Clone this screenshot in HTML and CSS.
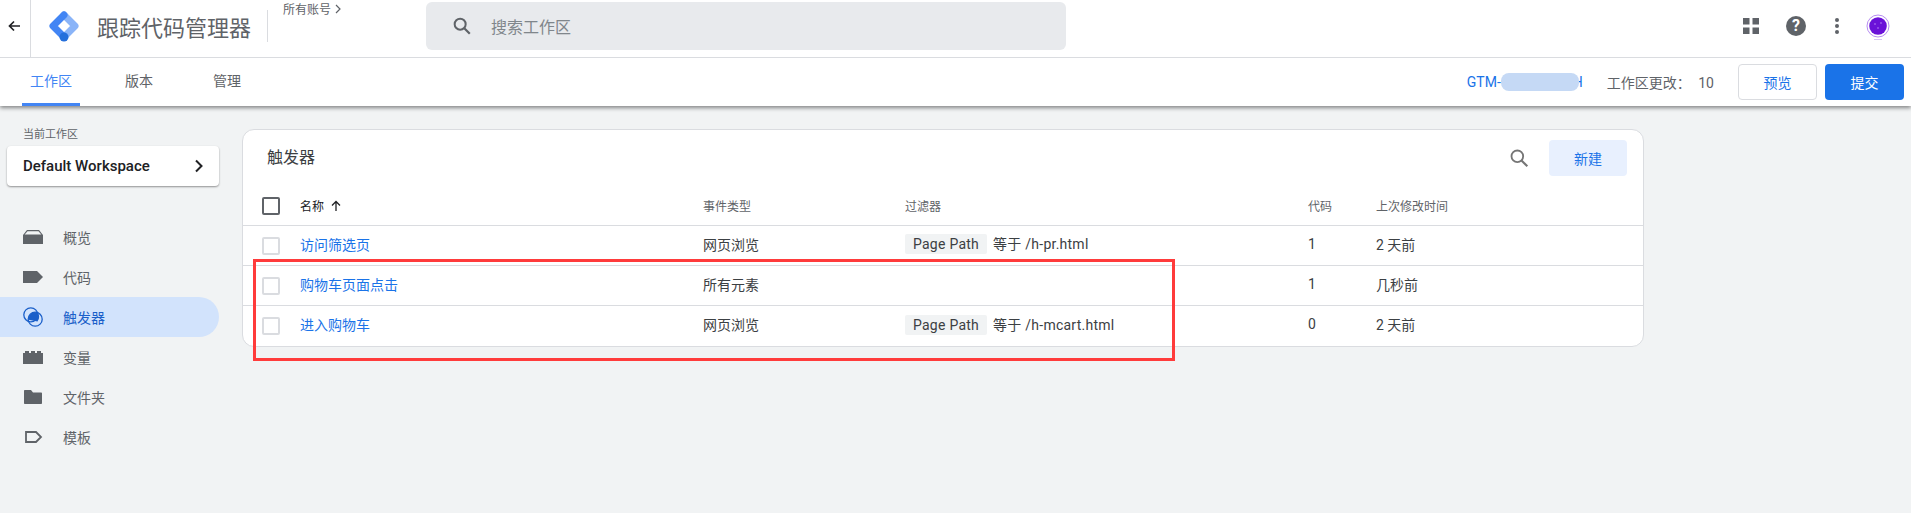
FILE: index.html
```html
<!DOCTYPE html>
<html lang="zh-CN">
<head>
    <meta charset="UTF-8">
    <title>跟踪代码管理器</title>
    <link rel="stylesheet" href="styles.css">
</head>
<body>
    <header class="app-header">
        <div class="top-bar">
            <div class="back-btn">
                <svg width="14" height="14" viewBox="0 0 14 14"><path d="M13 7H3M7 2.5 2.500 7 7 11.500" fill="none" stroke="#202124" stroke-width="1.7"/></svg>
            </div>
            <svg class="logo" width="30" height="32" viewBox="0 0 30 32" fill="none" stroke-width="7" stroke-linecap="round" stroke-linejoin="round">
                <path d="M15 5 26 16 15 27" stroke="#8ab4f8"/>
                <path d="M15 5 4 16 15 27" stroke="#4285f4"/>
                <circle cx="15" cy="27" r="4.500" fill="#246fdb" stroke="none"/>
            </svg>
            <div class="app-title">跟踪代码管理器</div>
            <div class="title-divider"></div>
            <div class="crumb">所有账号 <svg width="8" height="10" viewBox="0 0 8 10"><path d="M2 1l4 4-4 4" fill="none" stroke="#5f6368" stroke-width="1.2"/></svg></div>
            <div class="search-box">
                <svg width="22" height="22" viewBox="0 0 24 24"><circle cx="10" cy="10" r="6" fill="none" stroke="#5f6368" stroke-width="2.2"/><path d="M14.500 14.500 20.500 20.500" stroke="#5f6368" stroke-width="2.4"/></svg>
                <span>搜索工作区</span>
            </div>
            <div class="top-icons">
                <svg class="icon-apps" width="16" height="16" viewBox="0 0 16 16" fill="#5f6368"><rect width="6.500" height="6.500"/><rect x="9.500" width="6.500" height="6.500"/><rect y="9.500" width="6.500" height="6.500"/><rect x="9.500" y="9.500" width="6.500" height="6.500"/></svg>
                <div class="icon-help">?</div>
                <svg class="icon-more" width="4" height="16" viewBox="0 0 4 16" fill="#5f6368"><circle cx="2" cy="2" r="2"/><circle cx="2" cy="8" r="2"/><circle cx="2" cy="14" r="2"/></svg>
                <svg class="icon-avatar" width="24" height="27" viewBox="0 0 24 27">
                    <circle cx="12" cy="12" r="11" fill="#fff" stroke="#b78cf2" stroke-width="1"/>
                    <circle cx="12" cy="12" r="8.800" fill="#6a11d8"/>
                    <circle cx="9" cy="10" r="0.800" fill="#b98af5"/><circle cx="15" cy="9" r="0.800" fill="#b98af5"/><circle cx="12" cy="14" r="0.800" fill="#b98af5"/>
                    <rect x="8" y="25" width="8" height="1" fill="#d9c5f7"/>
                </svg>
            </div>
        </div>
        <div class="nav-bar">
            <nav class="tabs">
                <a class="tab tab-active">工作区</a>
                <a class="tab tab-versions">版本</a>
                <a class="tab">管理</a>
            </nav>
            <div class="nav-right">
                <span class="gtm-id">GTM-<span class="gtm-blur"></span>H</span>
                <span class="change-count">工作区更改： <span class="count-num">10</span></span>
                <button class="btn btn-preview">预览</button>
                <button class="btn btn-submit">提交</button>
            </div>
        </div>
    </header>

    <div class="page">
        <aside class="sidebar">
            <div class="ws-label">当前工作区</div>
            <div class="ws-card">
                <span>Default Workspace</span>
                <svg width="12" height="14" viewBox="0 0 12 14"><path d="M3 1.500 8.500 7 3 12.500" fill="none" stroke="#202124" stroke-width="2"/></svg>
            </div>
            <ul class="side-menu">
                <li class="side-item">
                    <svg width="20" height="16" viewBox="0 0 20 16" fill="#5f6368"><path d="M4 1h12l4 5v9H0V6z"/><path d="M4.500 2.200h11L18.300 5.500H1.700z" fill="#f1f3f4"/></svg>
                    <span>概览</span>
                </li>
                <li class="side-item">
                    <svg width="20" height="14" viewBox="0 0 20 14" fill="#5f6368"><path d="M0 1h14l6 6-6 6H0z"/></svg>
                    <span>代码</span>
                </li>
                <li class="side-item side-active">
                    <svg width="20" height="20" viewBox="0 0 20 20"><circle cx="7.800" cy="7.800" r="7" fill="none" stroke="#1a5fc9" stroke-width="1.3"/><circle cx="12.200" cy="12.200" r="7" fill="none" stroke="#1a5fc9" stroke-width="1.3"/><path d="M5.500 12.800A7 7 0 0 1 14.500 5.500 7 7 0 0 1 14.500 14.500z" fill="#1a5fc9"/></svg>
                    <span>触发器</span>
                </li>
                <li class="side-item">
                    <svg width="20" height="14" viewBox="0 0 20 14" fill="#5f6368"><path d="M0 3h2V1h4v2h2V1h4v2h2V1h4v2h2v11H0z"/></svg>
                    <span>变量</span>
                </li>
                <li class="side-item">
                    <svg width="20" height="16" viewBox="0 0 20 16" fill="#5f6368"><path d="M1 2c0-.6.400-1 1-1h6l2 2.500h8c.6 0 1 .4 1 1V14c0 .6-.4 1-1 1H2c-.6 0-1-.4-1-1z"/></svg>
                    <span>文件夹</span>
                </li>
                <li class="side-item">
                    <svg width="20" height="14" viewBox="0 0 20 14"><path d="M3 2h10l5 5-5 5H3z" fill="none" stroke="#5f6368" stroke-width="1.8"/></svg>
                    <span>模板</span>
                </li>
            </ul>
        </aside>

        <main class="content">
            <section class="card">
                <div class="card-head">
                    <h2>触发器</h2>
                    <div class="card-actions">
                        <svg width="20" height="20" viewBox="0 0 24 24"><circle cx="10" cy="10" r="7" fill="none" stroke="#757575" stroke-width="2.2"/><path d="M15 15 22 22" stroke="#757575" stroke-width="2.6"/></svg>
                        <button class="btn-new">新建</button>
                    </div>
                </div>
                <div class="row row-head">
                    <div><span class="check check-dark"></span></div>
                    <div class="col-name">名称 <svg width="12" height="12" viewBox="0 0 12 12"><path d="M6 11V2M2 5.500 6 1.500l4 4" fill="none" stroke="#202124" stroke-width="1.3"/></svg></div>
                    <div>事件类型</div>
                    <div>过滤器</div>
                    <div>代码</div>
                    <div>上次修改时间</div>
                </div>
                <div class="row">
                    <div><span class="check"></span></div>
                    <div><a class="link">访问筛选页</a></div>
                    <div>网页浏览</div>
                    <div class="col-filter"><span class="chip">Page Path</span>等于 /h-pr.html</div>
                    <div>1</div>
                    <div>2 天前</div>
                </div>
                <div class="row">
                    <div><span class="check"></span></div>
                    <div><a class="link">购物车页面点击</a></div>
                    <div>所有元素</div>
                    <div></div>
                    <div>1</div>
                    <div>几秒前</div>
                </div>
                <div class="row row-last">
                    <div><span class="check"></span></div>
                    <div><a class="link">进入购物车</a></div>
                    <div>网页浏览</div>
                    <div class="col-filter"><span class="chip">Page Path</span>等于 /h-mcart.html</div>
                    <div>0</div>
                    <div>2 天前</div>
                </div>
            </section>
        </main>
    </div>

    <!-- red annotation box drawn on top of the screenshot -->
    <div class="annotation"></div>
</body>
</html>
```
FILE: styles.css
```css
* {
    box-sizing: border-box;
}
html, body {
    height: 100%;
}
body {
    margin: 0;
    background-color: #f1f3f4;
    font-family: Roboto, "Noto Sans CJK SC", sans-serif;
    font-size: 14px;
    color: #3c4043;
    overflow: hidden;
}
.app-header {
    background-color: white;
    box-shadow: 0 2px 4px rgba(0, 0, 0, 0.45);
    position: relative;
}
.top-bar {
    height: 58px;
    display: flex;
    align-items: center;
    padding-bottom: 5px;
    border-bottom: 1px solid #dadce0;
}
.back-btn {
    width: 31px;
    height: 57px;
    margin-bottom: -5px;
    display: flex;
    align-items: center;
    justify-content: center;
    padding-right: 2px;
    border-right: 1px solid #dadce0;
}
.back-btn svg {
    margin-bottom: 5px;
}
.logo {
    margin-left: 18px;
}
.app-title {
    margin-left: 18px;
    font-size: 22px;
    color: #5f6368;
}
.title-divider {
    width: 1px;
    height: 32px;
    margin-left: 16px;
    background-color: #dadce0;
}
.crumb {
    align-self: flex-start;
    margin: 2px 0 0 15px;
    font-size: 12px;
    line-height: 16px;
    color: #5f6368;
}
.search-box {
    position: absolute;
    left: 426px;
    top: 2px;
    width: 640px;
    height: 48px;
    display: flex;
    align-items: center;
    gap: 18px;
    padding-left: 25px;
    border-radius: 6px;
    background-color: #e8eaed;
    font-size: 16px;
    color: #80868b;
}
.top-icons {
    margin-left: auto;
    display: flex;
    align-items: center;
}
.icon-apps {
    margin-right: 27px;
}
.icon-help {
    width: 20px;
    height: 20px;
    border-radius: 50%;
    background-color: #5f6368;
    color: white;
    font-size: 16px;
    font-weight: 700;
    line-height: 20px;
    text-align: center;
    margin-right: 29px;
}
.icon-more {
    margin-right: 27px;
}
.icon-avatar {
    margin-right: 21px;
    margin-top: 3px;
}
.nav-bar {
    height: 48px;
    display: flex;
    align-items: stretch;
    justify-content: space-between;
}
.tabs {
    display: flex;
    padding-left: 22px;
}
.tab {
    line-height: 46px;
    text-align: center;
    color: #5f6368;
    padding: 0 8px;
    margin-right: 37px;
}
.tab-active {
    color: #4285f4;
    border-bottom: 3px solid #4285f4;
    border-radius: 3px 3px 0 0;
}
.tab-versions {
    margin-right: 44px;
}
.nav-right {
    display: flex;
    align-items: center;
}
.gtm-id {
    display: flex;
    align-items: center;
    color: #1a73e8;
    margin-right: 24px;
}
.gtm-blur {
    display: inline-block;
    position: relative;
    z-index: 1;
    width: 78px;
    height: 18px;
    margin-right: -6px;
    border-radius: 8px;
    background-color: #c5d9f5;
}
.change-count {
    color: #5f6368;
    margin-right: 24px;
}
.count-num {
    margin-left: 4px;
}
.btn {
    width: 79px;
    height: 36px;
    border-radius: 4px;
    font-family: inherit;
    font-size: 14px;
}
.btn-preview {
    background-color: white;
    border: 1px solid #dadce0;
    color: #1a73e8;
    margin-right: 8px;
}
.btn-submit {
    background-color: #1a73e8;
    border: none;
    color: white;
    margin-right: 7px;
}
.page {
    display: flex;
    align-items: flex-start;
}
.sidebar {
    width: 220px;
    flex-shrink: 0;
}
.ws-label {
    margin: 21px 0 0 23px;
    font-size: 11px;
    line-height: 15px;
    color: #5f6368;
}
.ws-card {
    width: 212px;
    height: 40px;
    margin: 4px 0 0 7px;
    padding: 0 14px 0 16px;
    display: flex;
    align-items: center;
    justify-content: space-between;
    background-color: white;
    border-radius: 4px;
    box-shadow: 0 1px 2px rgba(0, 0, 0, 0.4);
    font-size: 15px;
    font-weight: 500;
    color: #202124;
}
.side-menu {
    list-style: none;
    margin: 31px 0 0;
    padding: 0;
}
.side-item {
    width: 219px;
    height: 40px;
    display: flex;
    align-items: center;
    gap: 20px;
    padding-left: 23px;
    border-radius: 0 20px 20px 0;
    color: #5f6368;
}
.side-active {
    background-color: #d2e3fc;
    color: #1a5fc9;
}
.content {
    padding: 23px 0 0 22px;
}
.card {
    width: 1402px;
    background-color: white;
    border: 1px solid #dadce0;
    border-radius: 12px;
}
.card-head {
    height: 60px;
    display: flex;
    align-items: center;
    justify-content: space-between;
    padding: 0 16px 8px 24px;
}
.card-head h2 {
    margin: 0;
    font-size: 16px;
    font-weight: 400;
    color: #3c4043;
}
.card-actions {
    display: flex;
    align-items: center;
    gap: 20px;
    margin-top: 4px;
}
.btn-new {
    width: 78px;
    height: 36px;
    border: none;
    border-radius: 4px;
    background-color: #e8f0fe;
    color: #1a73e8;
    font-family: inherit;
    font-size: 14px;
}
.row {
    display: grid;
    grid-template-columns: 57px 403px 202px 403px 68px 1fr;
    align-items: center;
    height: 40px;
    border-bottom: 1px solid #dadce0;
}
.row > div {
    padding-bottom: 4px;
}
.row > div:first-child {
    padding: 0 0 0 19px;
    display: flex;
}
.row-head {
    height: 36px;
    padding-bottom: 4px;
    font-size: 12px;
    color: #5f6368;
}
.row-head > div {
    padding-bottom: 0;
}
.row-last {
    border-bottom: none;
}
.col-name {
    color: #202124;
}
.col-name svg {
    margin-left: 3px;
    vertical-align: -1px;
}
.col-filter {
    letter-spacing: 0.25px;
}
.check {
    display: block;
    width: 18px;
    height: 18px;
    border: 2px solid #dadce0;
    border-radius: 2px;
}
.check-dark {
    border-color: #5f6368;
}
.link {
    color: #1a73e8;
}
.chip {
    display: inline-block;
    height: 20px;
    line-height: 20px;
    padding: 0 8px;
    margin-right: 6px;
    border-radius: 2px;
    background-color: #f1f3f4;
}
.annotation {
    position: absolute;
    left: 253px;
    top: 259px;
    width: 922px;
    height: 102px;
    border: 3px solid #ff3b3b;
    pointer-events: none;
}
```
